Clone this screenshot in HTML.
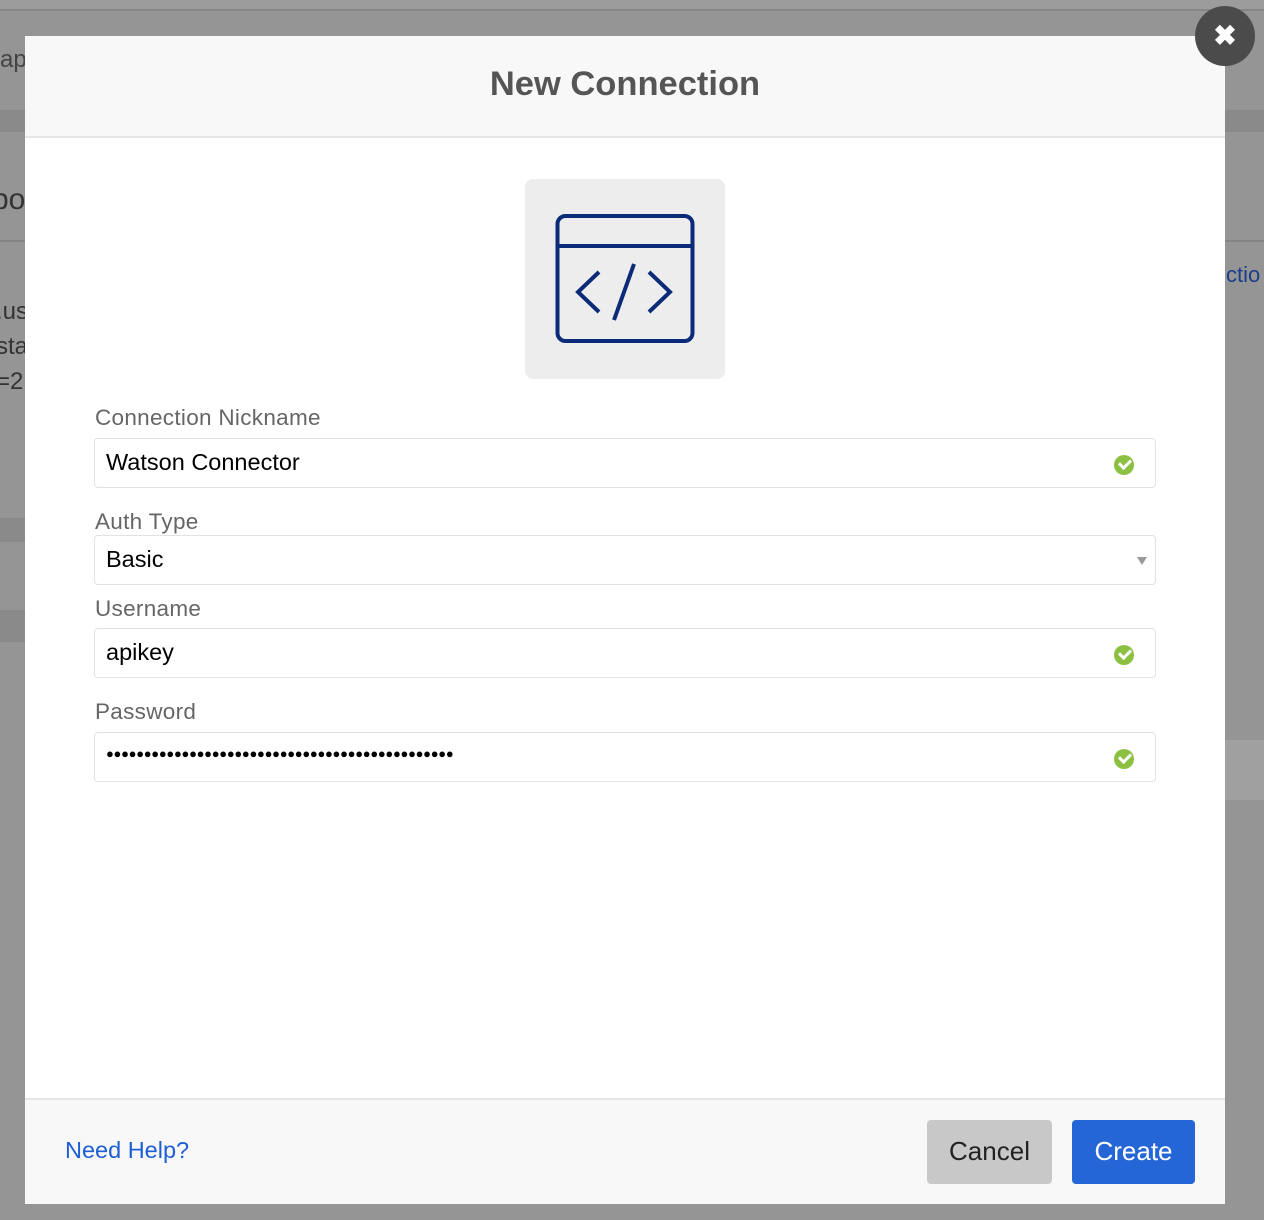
<!DOCTYPE html>
<html><head><meta charset="utf-8"><style>
*{margin:0;padding:0;box-sizing:border-box}
body{width:1264px;height:1220px;background:#959595;position:relative;overflow:hidden;font-family:"Liberation Sans",sans-serif}
.abs{position:absolute}
.modal{left:25px;top:36px;width:1200px;height:1168px;background:#fff}
.hdr{left:0;top:0;width:1200px;height:102px;background:#f8f8f8;border-bottom:2px solid #e6e6e6}
.ftr{left:0;top:1062px;width:1200px;height:106px;background:#f8f8f8;border-top:2px solid #e6e6e6}
.lbl{position:absolute;left:70px;font-size:22.5px;color:#666;line-height:1;letter-spacing:0.3px}
.inp{position:absolute;left:69px;width:1062px;height:50px;border:1px solid #e2e2e2;border-radius:4px;background:#fff}
.inp span{position:absolute;left:11px;top:12px;font-size:23.5px;color:#000;line-height:1}
.chk{position:absolute;right:21px;top:16px;width:20px;height:20px;border-radius:50%;background:#8cc043}
.chk:after{content:"";position:absolute;left:5px;top:4px;width:9px;height:5px;border-left:3px solid #fff;border-bottom:3px solid #fff;transform:rotate(-45deg)}
</style></head><body>
<div class="abs" style="left:0;top:0;width:1264px;height:11px;background:#9c9c9c;border-bottom:2px solid #858585"></div>
<div class="abs" style="left:0;top:110px;width:1264px;height:22px;background:#8a8a8a"></div>
<div class="abs" style="left:0;top:240px;width:1264px;height:2px;background:#858585"></div>
<div class="abs" style="left:0;top:518px;width:25px;height:24px;background:#8a8a8a"></div>
<div class="abs" style="left:0;top:610px;width:25px;height:32px;background:#8a8a8a"></div>
<div class="abs" style="left:1225px;top:740px;width:39px;height:60px;background:#a0a0a0"></div>
<div class="abs" style="left:0;top:46px;font-size:24px;color:#444">app</div>
<div class="abs" style="left:-8px;top:183px;font-size:30px;color:#333">po</div>
<div class="abs" style="left:-4px;top:294px;font-size:24px;color:#333;line-height:35px">.us<br>sta<br>=2</div>
<div class="abs" style="left:1226px;top:262px;font-size:22px;color:#1b3d8a">ctio</div>
<div class="abs modal">
 <div class="abs hdr"><div style="text-align:center;font-weight:bold;font-size:34.5px;color:#555;padding-top:29px">New Connection</div></div>
 <div class="abs" style="left:500px;top:143px;width:200px;height:200px;background:#ededed;border-radius:8px"></div>
 <svg class="abs" style="left:0;top:0" width="1200" height="400" viewBox="25 36 1200 400">
  <g fill="none" stroke="#0b2b78" stroke-width="4">
   <rect x="557.5" y="216" width="135" height="125" rx="8"/>
   <line x1="557" y1="246" x2="693" y2="246"/>
   <polyline points="599,272 578,292 599,312"/>
   <line x1="634" y1="264" x2="614" y2="320"/>
   <polyline points="649,272 670,292 649,312"/>
  </g>
 </svg>
 <div class="lbl" style="top:371px">Connection Nickname</div>
 <div class="inp" style="top:402px"><span>Watson Connector</span><div class="chk"></div></div>
 <div class="lbl" style="top:475px">Auth Type</div>
 <div class="inp" style="top:499px"><span>Basic</span><div style="position:absolute;right:8px;top:21px;width:0;height:0;border-left:5px solid transparent;border-right:5px solid transparent;border-top:8px solid #999"></div></div>
 <div class="lbl" style="top:562px">Username</div>
 <div class="inp" style="top:592px"><span>apikey</span><div class="chk"></div></div>
 <div class="lbl" style="top:665px">Password</div>
 <div class="inp" style="top:696px"><span style="top:14px;font-size:13px;letter-spacing:-0.3px;font-weight:bold">●●●●●●●●●●●●●●●●●●●●●●●●●●●●●●●●●●●●●●●●●●●●●●</span><div class="chk"></div></div>
 <div class="abs ftr">
  <div class="abs" style="left:40px;top:37px;font-size:23.5px;color:#1f5fd6">Need Help?</div>
  <div class="abs" style="left:902px;top:20px;width:125px;height:64px;background:#c8c8c8;border-radius:4px;font-size:26px;color:#222;text-align:center;line-height:62px">Cancel</div>
  <div class="abs" style="left:1047px;top:20px;width:123px;height:64px;background:#2566d6;border-radius:4px;font-size:26px;color:#fff;text-align:center;line-height:62px">Create</div>
 </div>
</div>
<div class="abs" style="left:1195px;top:6px;width:60px;height:60px;border-radius:50%;background:#4b4b4b;color:#fff;font-size:28px;font-weight:bold;text-align:center;line-height:60px">✖</div>
</body></html>
